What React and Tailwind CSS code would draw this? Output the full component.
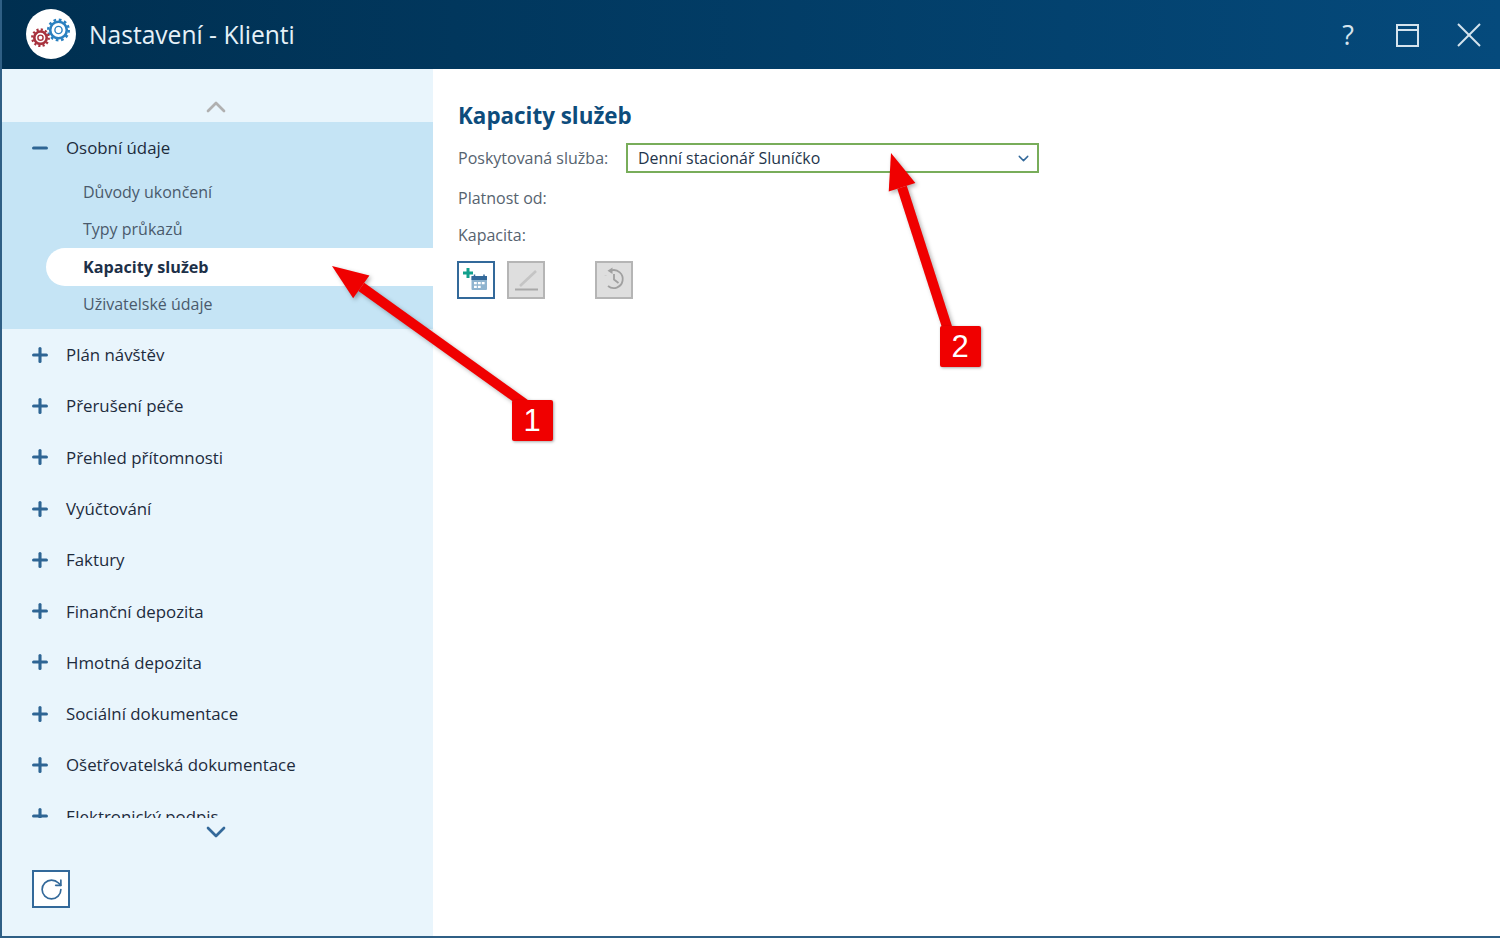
import { Plus, Minus, ChevronUp, ChevronDown, RotateCw } from 'lucide-react';

const groups = [
  'Plán návštěv',
  'Přerušení péče',
  'Přehled přítomnosti',
  'Vyúčtování',
  'Faktury',
  'Finanční depozita',
  'Hmotná depozita',
  'Sociální dokumentace',
  'Ošetřovatelská dokumentace',
  'Elektronický podpis',
];

const subItems = ['Důvody ukončení', 'Typy průkazů', 'Kapacity služeb', 'Uživatelské údaje'];

function Gear({ cx, cy, r, color, inner }) {
  const tooth = (2 * Math.PI * r) / 24;
  return (
    <g fill="none" stroke={color}>
      <circle cx={cx} cy={cy} r={r} strokeWidth="2.4" strokeDasharray={`${tooth} ${tooth}`} />
      <circle cx={cx} cy={cy} r={r - 2} strokeWidth="2.6" />
      <circle cx={cx} cy={cy} r={inner} strokeWidth="1.4" />
    </g>
  );
}

function Logo() {
  return (
    <div className="mb-[2px] flex h-[50px] w-[50px] items-center justify-center rounded-full bg-white">
      <svg width="50" height="50" viewBox="0 0 50 50">
        <Gear cx={32.5} cy={21} r={10.3} color="#2a80c0" inner={3.6} />
        <Gear cx={14.5} cy={28.7} r={8.2} color="#a8323e" inner={2.6} />
      </svg>
    </div>
  );
}

function Arrow({ x1, y1, x2, y2 }) {
  // hrot šipky je v x2,y2
  const angle = Math.atan2(y2 - y1, x2 - x1);
  const len = 36;
  const half = 14;
  const bx = x2 - Math.cos(angle) * len;
  const by = y2 - Math.sin(angle) * len;
  const nx = -Math.sin(angle) * half;
  const ny = Math.cos(angle) * half;
  return (
    <g>
      <line x1={x1} y1={y1} x2={bx} y2={by} stroke="#f00000" strokeWidth="10" />
      <polygon points={`${x2},${y2} ${bx + nx},${by + ny} ${bx - nx},${by - ny}`} fill="#f00000" />
    </g>
  );
}

function Badge({ children, className }) {
  return (
    <div className={`absolute flex h-[41px] w-[41px] items-center justify-center rounded-[2px] bg-[#f00000] pt-[2px] pr-[1px] font-['Liberation_Sans',sans-serif] text-[31px] text-white shadow-[1px_1px_3px_rgba(0,0,0,0.35)] ${className}`}>
      {children}
    </div>
  );
}

export default function App() {
  return (
    <div className="relative flex h-[938px] w-[1500px] flex-col overflow-hidden border-b-2 border-l-2 border-[#2f5f85] bg-white font-['Open_Sans',sans-serif]">
      <header className="-ml-[2px] flex h-[69px] shrink-0 items-center bg-gradient-to-r from-[#002f50] to-[#054a7c] pl-[26px]">
        <Logo />
        <span className="ml-[13px] mt-[2px] text-[24.6px] text-[#e6f1f8]">Nastavení - Klienti</span>
        <div className="ml-auto flex items-center text-[#d5e4ee]">
          <span className="mr-[42px] text-[27px] leading-none">?</span>
          <svg width="24" height="24" viewBox="0 0 24 24" fill="none" stroke="currentColor" strokeWidth="2" className="mr-[36px]">
            <rect x="1" y="2" width="21" height="21" />
            <line x1="1" y1="7" x2="22" y2="7" />
          </svg>
          <svg width="26" height="26" viewBox="0 0 26 26" fill="none" stroke="currentColor" strokeWidth="2" className="mr-[18px]">
            <line x1="2" y1="2" x2="24" y2="24" />
            <line x1="24" y1="2" x2="2" y2="24" />
          </svg>
        </div>
      </header>

      <div className="flex min-h-0 flex-1">
        <aside className="flex w-[431px] shrink-0 flex-col bg-[#e9f5fc]">
          <div className="flex h-[53px] shrink-0 items-end justify-center pb-[1px] pr-[4px]">
            <ChevronUp size={32} strokeWidth={2} className="text-[#b0b0b0] -mb-[2px]" />
          </div>

          <div className="h-[696px] shrink-0 overflow-hidden">
            <div className="h-[207px] bg-[#c5e4f5]">
              <div className="flex h-[51px] items-center pl-[27px] text-[16.85px] text-[#1d2b3c]">
                <Minus size={22} strokeWidth={3.4} className="text-[#2e6594]" />
                <span className="ml-[15px]">Osobní údaje</span>
              </div>
              {subItems.map((item, i) =>
                i === 2 ? (
                  <div key={item} className="ml-[44px] flex h-[37.5px] items-center rounded-l-full bg-white pl-[37px] text-[16.2px] font-bold text-[#1d3048]">
                    {item}
                  </div>
                ) : (
                  <div key={item} className="flex h-[37.5px] items-center pl-[81px] text-[16px] text-[#4a5a6c]">
                    {item}
                  </div>
                )
              )}
            </div>
            {groups.map((g) => (
              <div key={g} className="flex h-[51.3px] items-center pl-[27px] text-[16.85px] text-[#1d2b3c]">
                <Plus size={22} strokeWidth={3.4} className="text-[#2e6594]" />
                <span className="ml-[15px]">{g}</span>
              </div>
            ))}
          </div>

          <div className="flex h-[28px] shrink-0 items-center justify-center pr-[4px]">
            <ChevronDown size={32} strokeWidth={2} className="text-[#33699a]" />
          </div>

          <div className="pl-[30px] pt-[24px]">
            <button className="flex h-[38px] w-[38px] items-center justify-center border-2 border-[#33699a] bg-white">
              <RotateCw size={25} strokeWidth={1.6} className="text-[#33699a]" />
            </button>
          </div>
        </aside>

        <main className="flex-1 pl-[25px] pt-[31px]">
          <h1 className="text-[22.4px] leading-[32px] font-bold text-[#0d4c7c]">Kapacity služeb</h1>
          <div className="mt-[11px] flex items-center">
            <span className="w-[168px] text-[16px] text-[#56636f]">Poskytovaná služba:</span>
            <div className="flex h-[30px] w-[413px] items-center justify-between border-2 border-[#78ad5a] pl-[10px] pr-[5px] pt-[1px] text-[15.9px] text-[#23344a]">
              <span>Denní stacionář Sluníčko</span>
              <ChevronDown size={17} strokeWidth={2} className="text-[#33699a]" />
            </div>
          </div>
          <div className="mt-[10px] flex h-[30px] items-center text-[16px] text-[#56636f]">Platnost od:</div>
          <div className="mt-[7px] flex h-[30px] items-center text-[16px] text-[#56636f]">Kapacita:</div>
          <div className="-ml-[1px] mt-[11px] flex">
            <button className="flex h-[38px] w-[38px] items-center justify-center border-2 border-[#33699a] bg-white">
              <svg width="34" height="34" viewBox="0 0 34 34">
                <path d="M9 5v10M4 10h10" stroke="#12a08c" strokeWidth="3" />
                <rect x="12.5" y="13" width="15.5" height="14" rx="1" fill="#8fb4cf" />
                <rect x="12.5" y="13" width="15.5" height="4" fill="#33699a" />
                <path d="M15.5 11.5v2M25 11.5v2" stroke="#33699a" strokeWidth="1.5" />
                <path d="M15 19h2.8v2.2H15zM18.9 19h2.8v2.2h-2.8zM22.8 19h2.8v2.2h-2.8zM15 22.8h2.8V25H15zM18.9 22.8h2.8V25h-2.8z" fill="#fff" />
              </svg>
            </button>
            <button className="ml-[12px] flex h-[38px] w-[38px] items-center justify-center border-2 border-[#b5b5b5] bg-[#dedede]">
              <svg width="34" height="34" viewBox="0 0 34 34" fill="none">
                <path d="M11 23L27 8" stroke="#c4c4c4" strokeWidth="2.6" />
                <path d="M6 26.5h23" stroke="#a8a8a8" strokeWidth="2" />
              </svg>
            </button>
            <button className="ml-[50px] flex h-[38px] w-[38px] items-center justify-center border-2 border-[#b5b5b5] bg-[#dedede]">
              <svg width="34" height="34" viewBox="0 0 34 34" fill="none" stroke="#a0a0a0" strokeWidth="1.8">
                <path d="M14 7.5A9 9 0 1 1 11 23" />
                <path d="M8 16v.1M8.6 12.8v.1M8.8 19.5v.1" strokeWidth="2" />
                <path d="M17 11v5.5l4.5 3.5" />
                <path d="M15.5 4.5v6.5l-5-3.2z" fill="#a0a0a0" stroke="none" />
              </svg>
            </button>
          </div>
        </main>
      </div>

      {/* anotace přes obrazovku */}
      <svg className="pointer-events-none absolute -left-[2px] top-0 drop-shadow-[2px_2px_2px_rgba(0,0,0,0.3)]" width="1500" height="938">
        <Arrow x1={525} y1={404} x2={332} y2={266} />
        <Arrow x1={948} y1={330} x2={891} y2={153} />
      </svg>
      <Badge className="left-[510px] top-[400px]">1</Badge>
      <Badge className="left-[938px] top-[326px]">2</Badge>
    </div>
  );
}
